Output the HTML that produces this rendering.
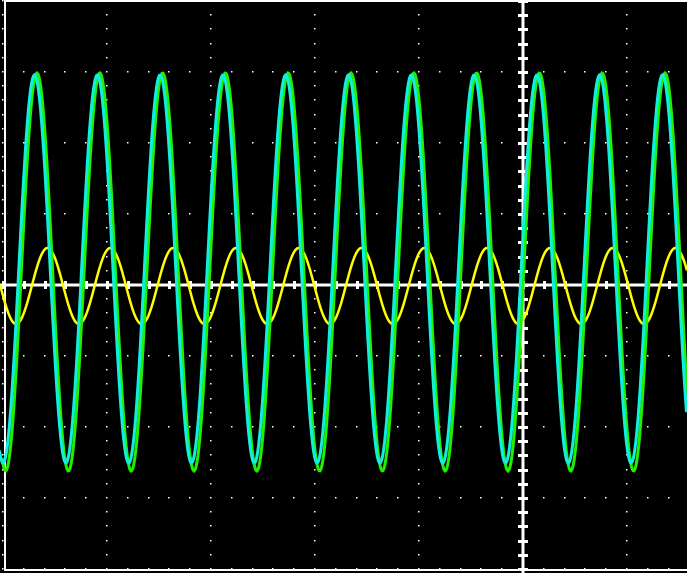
<!DOCTYPE html>
<html><head><style>
html,body{margin:0;padding:0;background:#000;width:687px;height:573px;overflow:hidden}
svg{display:block}
</style></head><body>
<svg id="s" width="687" height="573" viewBox="0 0 687 573" xmlns="http://www.w3.org/2000/svg">
<rect width="687" height="573" fill="#000"/>
<g id="grid" fill="#fff"></g>
<rect x="5" y="1" width="700" height="569" fill="none" stroke="#fff" stroke-width="2"/>
<line x1="523" y1="0" x2="523" y2="573" stroke="#fff" stroke-width="3"/>
<line x1="0" y1="285" x2="687" y2="285" stroke="#fff" stroke-width="3"/>
<g id="ticks" fill="#fff"></g>
<path id="y" fill="none" stroke="#ffff00" stroke-width="2.5"/>
<path id="g" fill="none" stroke="#22ee00" stroke-width="3"/>
<path id="c" fill="none" stroke="#11eedd" stroke-width="3"/>
</svg>
<script>
var NS="http://www.w3.org/2000/svg";
function r(p,x,y,w,h){var e=document.createElementNS(NS,"rect");e.setAttribute("x",x);e.setAttribute("y",y);e.setAttribute("width",w);e.setAttribute("height",h);document.getElementById(p).appendChild(e);}
var cx=523,cy=285,dx=104,dy=71;
for(var i=-5;i<=2;i++){var X=cx+i*dx;if(i==0)continue;for(var y=cy-4*dy;y<=cy+4*dy;y+=dy/5)r("grid",X-1,Math.round(y)-1,1.5,1.5);}
for(var j=-4;j<=4;j++){var Y=cy+j*dy;if(j==0)continue;for(var x=cx-5*dx;x<=700;x+=dx/5)r("grid",Math.round(x)-1,Y-1,1.5,1.5);}
for(var y=cy-4*dy;y<=cy+4*dy;y+=dy/5)r("ticks",cx-5,Math.round(y)-1,10,3);
for(var x=cx-5*dx;x<=700;x+=dx/5)r("ticks",Math.round(x)-1,cy-4,3,8);
function wave(id,amp,c,per,peak,ox){var d="";for(var x=0;x<=687;x+=1){var ph=2*Math.PI*(x-peak)/per;var y=c-amp*Math.cos(ph);d+=(x?"L":"M")+(x+ox)+" "+y.toFixed(1);}document.getElementById(id).setAttribute("d",d);}
wave("y",38,286,62.8,47.5,0);
wave("g",199,272,62.8,35,2);
wave("c",194,269,62.8,35,-0.5);
</script>
</body></html>
